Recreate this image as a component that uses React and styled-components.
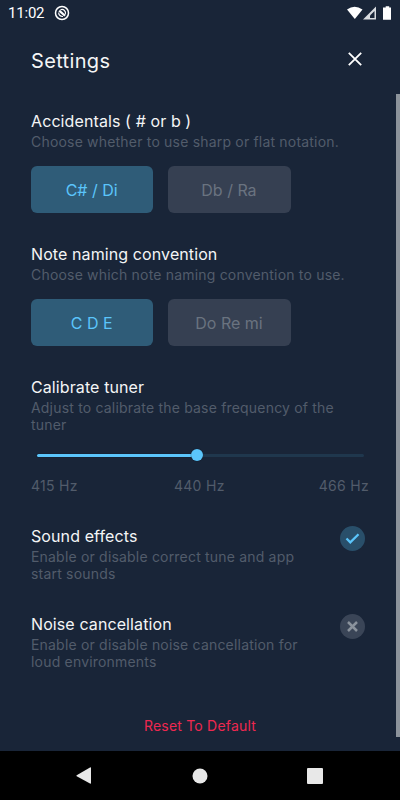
import React from "react";
import styled, { createGlobalStyle } from "styled-components";

const GlobalStyle = createGlobalStyle`
  *, *::before, *::after { box-sizing: border-box; }
  body { margin: 0; background: #192538; }
  button { font: inherit; border: 0; padding: 0; cursor: pointer; }
  h1, h2, p { margin: 0; font-weight: 400; }
`;

const Screen = styled.div`
  position: relative;
  display: flex;
  flex-direction: column;
  width: 400px;
  height: 800px;
  overflow: hidden;
  background: #192538;
  color: #f4f5f6;
  font-family: Inter, sans-serif;
`;

const StatusBar = styled.div`
  display: flex;
  align-items: center;
  height: 25px;
  padding: 0 4px 0 8px;
  color: #fff;
`;

const Clock = styled.span`
  width: 46px;
  padding-top: 2px;
  font: 400 15px/25px Roboto, sans-serif;
  letter-spacing: -0.2px;
`;

const StatusIcons = styled.div`
  display: flex;
  margin-left: auto;
`;

const Header = styled.header`
  display: flex;
  align-items: center;
  justify-content: space-between;
  height: 70px;
  padding: 2px 35px 0 31px;
`;

const Title = styled.h1`
  font-size: 20px;
  line-height: 24px;
  letter-spacing: 0.35px;
`;

const CloseButton = styled.button`
  display: flex;
  width: 20px;
  height: 20px;
  margin-top: -4px;
  align-items: center;
  justify-content: center;
  background: none;
  color: #fff;
`;

const Content = styled.main`
  flex: 1;
  padding: 16px 31px 0;
`;

const Setting = styled.section`
  height: ${(p) => p.$height}px;
`;

const SettingRow = styled(Setting)`
  display: flex;
  justify-content: space-between;
  padding-right: 4px;
`;

const Name = styled.h2`
  font-size: 16px;
  line-height: 20px;
  letter-spacing: 0.1px;
`;

const Description = styled.p`
  width: ${(p) => p.$width || 330}px;
  margin-top: 2px;
  color: #525c6b;
  font-size: 14px;
  line-height: 17px;
  letter-spacing: 0.19px;
`;

const Options = styled.div`
  display: flex;
  gap: 15px;
  margin-top: 16px;
`;

const Option = styled.button`
  width: 122.3px;
  height: 47px;
  padding: 1px 1px 0 0;
  border-radius: 6px;
  background: ${(p) => (p.$active ? "#2f5c78" : "#364052")};
  color: ${(p) => (p.$active ? "#5bc5fb" : "#6a7380")};
  font-size: 16px;
  line-height: 46px;
`;

const Slider = styled.div`
  display: flex;
  align-items: center;
  height: 12px;
  margin: 16px 5px 0 6px;
`;

const Fill = styled.div`
  width: 155px;
  height: 3px;
  border-radius: 2px 0 0 2px;
  background: #5bc5fb;
  box-shadow: 0 0 1px #07101d;
`;

const Thumb = styled.div`
  width: 12px;
  height: 12px;
  margin-left: -1px;
  border-radius: 50%;
  background: #5bc5fb;
  box-shadow: 0 0 1px #07101d;
`;

const Track = styled.div`
  flex: 1;
  height: 3px;
  border-radius: 0 2px 2px 0;
  background: #1f374d;
`;

const Labels = styled.div`
  display: flex;
  justify-content: space-between;
  margin-top: 16px;
  color: #525c6b;
  font-size: 14px;
  line-height: 18px;
  letter-spacing: 0.3px;
`;

const CenterLabel = styled.span`
  padding-left: 2px;
`;

const Toggle = styled.button`
  display: flex;
  align-items: center;
  justify-content: center;
  width: 25px;
  height: 25px;
  border-radius: 50%;
  background: ${(p) => (p.$on ? "#294f6a" : "#3a4557")};
  color: ${(p) => (p.$on ? "#5bc5fb" : "#8a929c")};
`;

const ResetButton = styled.button`
  display: block;
  margin: 15px auto 0;
  background: none;
  color: #ee2850;
  font-size: 14px;
  line-height: 18px;
  letter-spacing: 0.2px;
`;

const ScrollBar = styled.div`
  position: absolute;
  top: 94px;
  right: 0;
  width: 4px;
  height: 643px;
  background: #8c939b;
`;

const NavBar = styled.nav`
  display: flex;
  align-items: center;
  justify-content: space-between;
  height: 49px;
  padding: 0 77px 0 76px;
  background: #000;
`;

const choices = [
  {
    name: "Accidentals ( # or b )",
    text: "Choose whether to use sharp or flat notation.",
    options: ["C# / Di", "Db / Ra"],
  },
  {
    name: "Note naming convention",
    text: "Choose which note naming convention to use.",
    options: ["C D E", "Do Re mi"],
  },
];

const toggles = [
  { name: "Sound effects", text: "Enable or disable correct tune and app start sounds", on: true },
  { name: "Noise cancellation", text: "Enable or disable noise cancellation for loud environments", on: false },
];

export default function App() {
  return (
    <Screen>
      <GlobalStyle />
      <StatusBar>
        <Clock>11:02</Clock>
        <svg width="16" height="16" viewBox="0 0 16 16" fill="none" stroke="#fff">
          <circle cx="8" cy="8" r="6.5" strokeWidth="1.5" />
          <path d="M4.7 7.6A3.6 3.6 0 0 0 9 11.4M6.5 4.8A3.6 3.6 0 0 1 11.3 9.4" strokeWidth="1.2" />
          <path d="M5.2 5.6 11 10.8" strokeWidth="2.2" />
        </svg>
        <StatusIcons>
          <svg width="49" height="16" viewBox="0 0 49 16" fill="#fff">
            <path d="M0 4.5Q7.5-1.2 15.5 4.5L7.8 14Z" />
            <path d="M29 1.5V14.5H16Z" fill="#d9dce0" />
            <path d="M27.5 6V13H23V10.5Z" fill="#192538" />
            <path d="M38.7 1.3H42.2V2.4H44V14.8H36V2.4H38.7Z" />
          </svg>
        </StatusIcons>
      </StatusBar>
      <Header>
        <Title>Settings</Title>
        <CloseButton aria-label="Close">
          <svg width="14" height="14" viewBox="0 0 14 14" stroke="currentColor" strokeWidth="1.8">
            <path d="M.8.8 13.2 13.2M13.2.8.8 13.2" />
          </svg>
        </CloseButton>
      </Header>
      <Content>
        {choices.map((c) => (
          <Setting key={c.name} $height={133}>
            <Name>{c.name}</Name>
            <Description>{c.text}</Description>
            <Options>
              {c.options.map((o, i) => (
                <Option key={o} $active={i === 0}>{o}</Option>
              ))}
            </Options>
          </Setting>
        ))}
        <Setting $height={148.5}>
          <Name>Calibrate tuner</Name>
          <Description>Adjust to calibrate the base frequency of the tuner</Description>
          <Slider>
            <Fill />
            <Thumb />
            <Track />
          </Slider>
          <Labels>
            <span>415 Hz</span>
            <CenterLabel>440 Hz</CenterLabel>
            <span>466 Hz</span>
          </Labels>
        </Setting>
        {toggles.map((t) => (
          <SettingRow key={t.name} $height={88}>
            <div>
              <Name>{t.name}</Name>
              <Description $width={285}>{t.text}</Description>
            </div>
            <Toggle $on={t.on} aria-label={t.name}>
              {t.on ? (
                <svg width="15" height="13" viewBox="0 0 15 13" fill="none" stroke="currentColor" strokeWidth="2.3">
                  <path d="M1.5 6.5 5.3 10.3 13.5 2.3" />
                </svg>
              ) : (
                <svg width="11" height="11" viewBox="0 0 11 11" stroke="currentColor" strokeWidth="2.5">
                  <path d="M1 1 10 10M10 1 1 10" />
                </svg>
              )}
            </Toggle>
          </SettingRow>
        ))}
        <ResetButton>Reset To Default</ResetButton>
      </Content>
      <NavBar>
        <svg width="16" height="18" viewBox="0 0 16 18" fill="#e8e8e8">
          <path d="M.7 8.2 14 .5Q15 0 15 1V16Q15 17 14 16.5L.7 9.2Q0 8.7 .7 8.2Z" />
        </svg>
        <svg width="16" height="16" viewBox="0 0 16 16" fill="#e8e8e8">
          <circle cx="8" cy="8" r="7.5" />
        </svg>
        <svg width="16" height="16" viewBox="0 0 16 16" fill="#e8e8e8">
          <rect width="16" height="16" rx="1" />
        </svg>
      </NavBar>
      <ScrollBar />
    </Screen>
  );
}
